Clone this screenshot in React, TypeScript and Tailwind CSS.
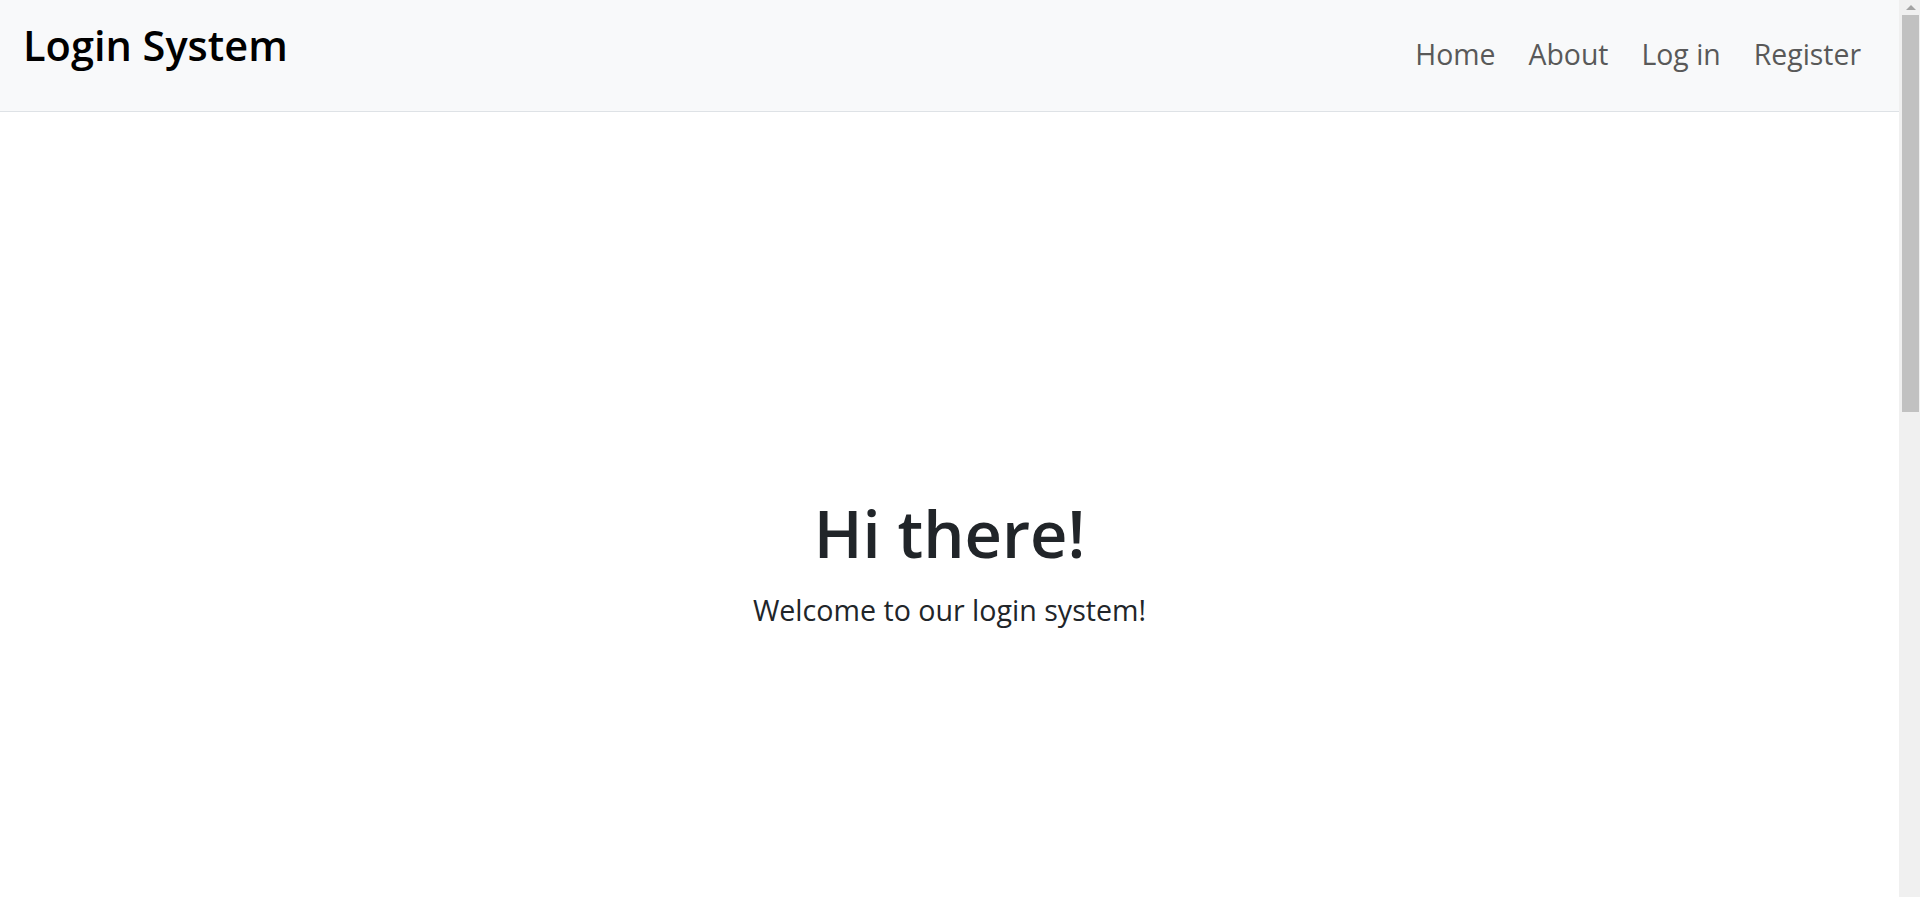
import React from 'react';

const links = ['Home', 'About', 'Log in', 'Register'];

const Scrollbar: React.FC = () => (
  <div className="w-[21px] shrink-0 h-full bg-[#f0f0f0] flex flex-col items-center">
    <div className="h-[15px] w-full flex items-center justify-center pl-[2px]">
      <div className="w-0 h-0 border-l-[5px] border-r-[5px] border-b-[5px] border-l-transparent border-r-transparent border-b-[#a3a3a3]" />
    </div>
    <div className="w-[17px] ml-[2px] h-[397px] bg-[#c1c1c1]" />
  </div>
);

export default function App() {
  return (
    <div className="flex h-screen w-full overflow-hidden bg-white font-['Open_Sans',sans-serif]">
      <div className="flex-1 flex flex-col min-w-0">
        {/* Navbar */}
        <nav className="h-[112px] shrink-0 bg-[#f8f9fa] border-b border-[#dee2e6] flex items-start justify-between pl-[23px] pr-[38px]">
          <a className="mt-[25px] text-[41.5px] leading-none font-semibold text-black">Login System</a>
          <ul className="mt-[40px] flex gap-[33px]">
            {links.map((l) => (
              <li key={l}>
                <a className="text-[28.4px] leading-none text-[#595959]">{l}</a>
              </li>
            ))}
          </ul>
        </nav>

        {/* Hero */}
        <main className="flex-1 flex flex-col items-center pt-[389px]">
          <h1 className="text-[65px] leading-none font-semibold text-[#212529]">Hi there!</h1>
          <p className="mt-[30px] text-[28.6px] leading-none text-[#212529]">Welcome to our login system!</p>
        </main>
      </div>
      <Scrollbar />
    </div>
  );
}
